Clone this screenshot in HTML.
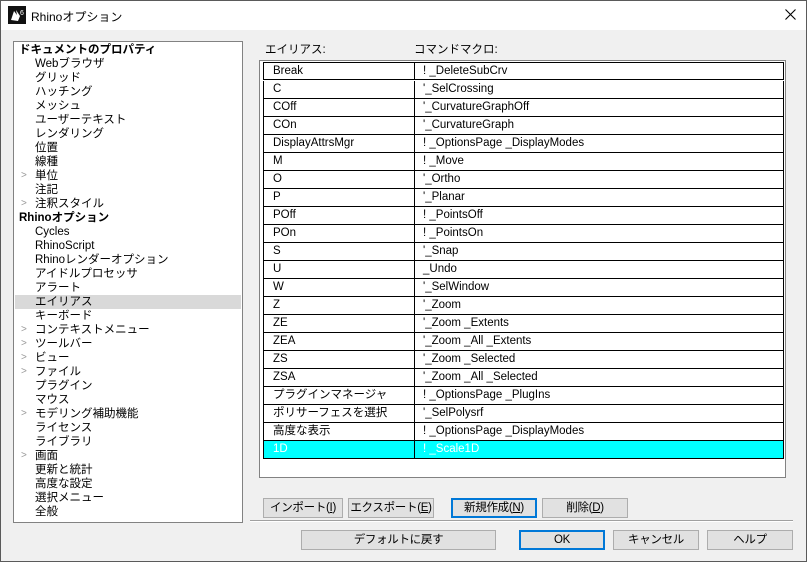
<!DOCTYPE html>
<html><head><meta charset="utf-8"><style>
*{margin:0;padding:0;box-sizing:border-box}
body{width:807px;height:562px;background:#f0f0f0;font-family:"Liberation Sans","Noto Sans CJK JP",sans-serif;font-size:12px;color:#000;position:relative;overflow:hidden}
.abs{position:absolute}
#frame{left:0;top:0;width:807px;height:562px;border:1px solid #5a5a5a;z-index:5;pointer-events:none}
#title{left:0;top:0;width:807px;height:30px;background:#fff}
#tree{left:13px;top:41px;width:230px;height:482px;background:#fff;border:1px solid #828282}
.ti{position:absolute;height:14px;line-height:14px;white-space:nowrap;font-size:11.5px}
.b{font-weight:bold;left:5px}
.n{left:21px}
.arr{position:absolute;left:7px;color:#999;font-size:10px;line-height:14px}
#tbl{left:259px;top:60px;width:527px;height:418px;background:#fff;border:1px solid #828282}
.r{position:absolute;left:3px;width:521px;height:18px;border-bottom:1px solid #000;border-left:1px solid #000;border-right:1px solid #000;line-height:17px;font-size:11.5px;white-space:nowrap}
.r span{position:absolute;left:9px}
.r span+span{left:159px}
.r:before{content:"";position:absolute;left:150px;top:0;bottom:-1px;border-left:1px solid #000}
.btn{position:absolute;height:20px;background:#e1e1e1;border:1px solid #adadad;text-align:center;line-height:18px;font-size:11.5px;white-space:nowrap;letter-spacing:-0.3px}
.def{border:2px solid #0078d7;line-height:16px}
</style></head><body>
<div id="frame" class="abs"></div>
<div id="title" class="abs">
<svg class="abs" style="left:8px;top:6px" width="18" height="18" viewBox="0 0 18 18"><rect width="18" height="18" fill="#111"/><path d="M3 14 L6 5 L9 9 L8 4 L12 10 L10 15 Z" fill="#fff"/><text x="12" y="9" fill="#fff" font-size="7" font-family="Liberation Sans">6</text></svg>
<div class="abs" style="left:31px;top:8px;font-size:12px">Rhinoオプション</div>
<svg class="abs" style="left:785px;top:9px" width="11" height="11"><path d="M0.5 0.5 L10.5 10.5 M10.5 0.5 L0.5 10.5" stroke="#000" stroke-width="1.1"/></svg>
</div>
<div id="tree" class="abs">
<div class="abs" style="left:1px;top:253px;width:226px;height:14px;background:#d9d9d9"></div>
<div class="ti b" style="top:1px">ドキュメントのプロパティ</div>
<div class="ti n" style="top:15px">Webブラウザ</div>
<div class="ti n" style="top:29px">グリッド</div>
<div class="ti n" style="top:43px">ハッチング</div>
<div class="ti n" style="top:57px">メッシュ</div>
<div class="ti n" style="top:71px">ユーザーテキスト</div>
<div class="ti n" style="top:85px">レンダリング</div>
<div class="ti n" style="top:99px">位置</div>
<div class="ti n" style="top:113px">線種</div>
<div class="ti n" style="top:127px">単位</div><span class="arr" style="top:127px">&gt;</span>
<div class="ti n" style="top:141px">注記</div>
<div class="ti n" style="top:155px">注釈スタイル</div><span class="arr" style="top:155px">&gt;</span>
<div class="ti b" style="top:169px">Rhinoオプション</div>
<div class="ti n" style="top:183px">Cycles</div>
<div class="ti n" style="top:197px">RhinoScript</div>
<div class="ti n" style="top:211px">Rhinoレンダーオプション</div>
<div class="ti n" style="top:225px">アイドルプロセッサ</div>
<div class="ti n" style="top:239px">アラート</div>
<div class="ti n" style="top:253px">エイリアス</div>
<div class="ti n" style="top:267px">キーボード</div>
<div class="ti n" style="top:281px">コンテキストメニュー</div><span class="arr" style="top:281px">&gt;</span>
<div class="ti n" style="top:295px">ツールバー</div><span class="arr" style="top:295px">&gt;</span>
<div class="ti n" style="top:309px">ビュー</div><span class="arr" style="top:309px">&gt;</span>
<div class="ti n" style="top:323px">ファイル</div><span class="arr" style="top:323px">&gt;</span>
<div class="ti n" style="top:337px">プラグイン</div>
<div class="ti n" style="top:351px">マウス</div>
<div class="ti n" style="top:365px">モデリング補助機能</div><span class="arr" style="top:365px">&gt;</span>
<div class="ti n" style="top:379px">ライセンス</div>
<div class="ti n" style="top:393px">ライブラリ</div>
<div class="ti n" style="top:407px">画面</div><span class="arr" style="top:407px">&gt;</span>
<div class="ti n" style="top:421px">更新と統計</div>
<div class="ti n" style="top:435px">高度な設定</div>
<div class="ti n" style="top:449px">選択メニュー</div>
<div class="ti n" style="top:463px">全般</div>
</div>
<div class="abs" style="left:265px;top:41px;font-size:11.5px">エイリアス:</div>
<div class="abs" style="left:414px;top:41px;font-size:11.5px">コマンドマクロ:</div>
<div id="tbl" class="abs">
<div class="r" style="top:1px;border-top:1px solid #000"><span>Break</span><span>! _DeleteSubCrv</span></div>
<div class="r" style="top:20px"><span>C</span><span>'_SelCrossing</span></div>
<div class="r" style="top:38px"><span>COff</span><span>'_CurvatureGraphOff</span></div>
<div class="r" style="top:56px"><span>COn</span><span>'_CurvatureGraph</span></div>
<div class="r" style="top:74px"><span>DisplayAttrsMgr</span><span>! _OptionsPage _DisplayModes</span></div>
<div class="r" style="top:92px"><span>M</span><span>! _Move</span></div>
<div class="r" style="top:110px"><span>O</span><span>'_Ortho</span></div>
<div class="r" style="top:128px"><span>P</span><span>'_Planar</span></div>
<div class="r" style="top:146px"><span>POff</span><span>! _PointsOff</span></div>
<div class="r" style="top:164px"><span>POn</span><span>! _PointsOn</span></div>
<div class="r" style="top:182px"><span>S</span><span>'_Snap</span></div>
<div class="r" style="top:200px"><span>U</span><span>_Undo</span></div>
<div class="r" style="top:218px"><span>W</span><span>'_SelWindow</span></div>
<div class="r" style="top:236px"><span>Z</span><span>'_Zoom</span></div>
<div class="r" style="top:254px"><span>ZE</span><span>'_Zoom _Extents</span></div>
<div class="r" style="top:272px"><span>ZEA</span><span>'_Zoom _All _Extents</span></div>
<div class="r" style="top:290px"><span>ZS</span><span>'_Zoom _Selected</span></div>
<div class="r" style="top:308px"><span>ZSA</span><span>'_Zoom _All _Selected</span></div>
<div class="r" style="top:326px"><span>プラグインマネージャ</span><span>! _OptionsPage _PlugIns</span></div>
<div class="r" style="top:344px"><span>ポリサーフェスを選択</span><span>'_SelPolysrf</span></div>
<div class="r" style="top:362px"><span>高度な表示</span><span>! _OptionsPage _DisplayModes</span></div>
<div class="r" style="top:380px;background:#00ffff;color:#fff"><span>1D</span><span>! _Scale1D</span></div>
</div>
<div class="btn" style="left:263px;top:498px;width:80px">インポート(<u>I</u>)</div>
<div class="btn" style="left:348px;top:498px;width:86px">エクスポート(<u>E</u>)</div>
<div class="btn def" style="left:451px;top:498px;width:86px">新規作成(<u>N</u>)</div>
<div class="btn" style="left:542px;top:498px;width:86px">削除(<u>D</u>)</div>
<div class="abs" style="left:250px;top:520px;width:543px;height:1px;background:#a0a0a0"></div>
<div class="abs" style="left:250px;top:521px;width:543px;height:1px;background:#fff"></div>
<div class="btn" style="left:301px;top:530px;width:195px">デフォルトに戻す</div>
<div class="btn def" style="left:519px;top:530px;width:86px">OK</div>
<div class="btn" style="left:613px;top:530px;width:86px">キャンセル</div>
<div class="btn" style="left:707px;top:530px;width:86px">ヘルプ</div>
</body></html>
